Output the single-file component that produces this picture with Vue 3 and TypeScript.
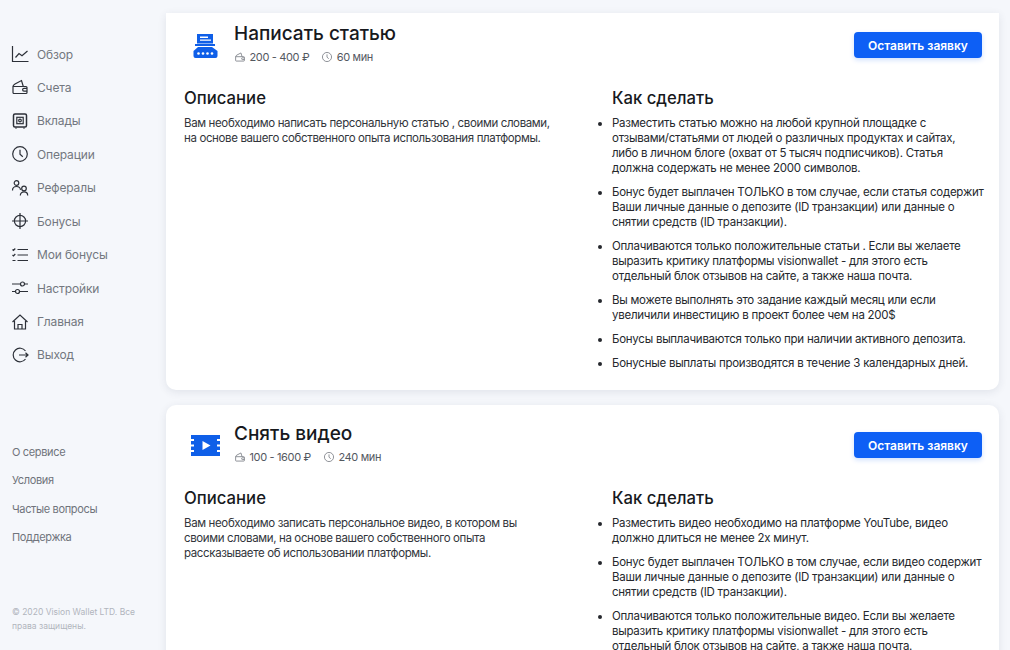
<template>
  <div class="page">
    <aside class="sidebar">
      <nav class="menu">
        <a v-for="item in menu" :key="item.label" class="menu-item">
          <svg class="menu-icon" viewBox="1 1 16 16" v-html="item.icon"></svg>
          <span>{{ item.label }}</span>
        </a>
      </nav>
      <div class="links">
        <a v-for="link in links" :key="link">{{ link }}</a>
      </div>
      <p class="copy">© 2020 Vision Wallet LTD. Все права защищены.</p>
    </aside>
    <main class="content">
      <section v-for="task in tasks" :key="task.title" class="card">
        <header class="card-head">
          <svg class="task-icon" viewBox="0 0 32 32" v-html="task.icon"></svg>
          <div class="head-text">
            <h2>{{ task.title }}</h2>
            <div class="meta">
              <svg class="meta-icon" viewBox="1 1 16 16" v-html="walletIcon"></svg>
              <span class="price">{{ task.price }}</span>
              <svg class="meta-icon" viewBox="1 1 16 16" v-html="clockIcon"></svg>
              <span>{{ task.time }}</span>
            </div>
          </div>
          <button class="apply">Оставить заявку</button>
        </header>
        <div class="columns">
          <div>
            <h3>Описание</h3>
            <p class="desc">{{ task.desc }}</p>
          </div>
          <div>
            <h3>Как сделать</h3>
            <ul>
              <li v-for="step in task.steps" :key="step">{{ step }}</li>
            </ul>
          </div>
        </div>
      </section>
    </main>
  </div>
</template>

<script setup lang="ts">
const walletIcon =
  '<path d="M2 8.500h13a1 1 0 0 1 1 1v5a1 1 0 0 1-1 1H3a1 1 0 0 1-1-1zM2 8.500c0-1 1-2 2-2.600L10.500 2.500l1.800 6M16 10.300h-3a1.400 1.400 0 0 0 0 2.800h3"/>'
const clockIcon = '<circle cx="9" cy="9" r="7.300"/><path d="M9 4.800v4.500l2.800 2.400"/>'

const menu = [
  { label: 'Обзор', icon: '<path d="M1.500 1v15.500h16M4.500 12.500l3.500-4 3 2.200L16.500 6"/>' },
  { label: 'Счета', icon: walletIcon },
  {
    label: 'Вклады',
    icon: '<rect x="2.500" y="2" width="13" height="13" rx="1.500" stroke-width="1.500"/><rect x="5.800" y="5.300" width="6.400" height="6.400"/><circle cx="9" cy="8.500" r="1.300"/><path d="M5 15.500v1.200M13 15.500v1.200"/>'
  },
  { label: 'Операции', icon: clockIcon },
  {
    label: 'Рефералы',
    icon: '<circle cx="5.500" cy="4" r="2.300"/><path d="M1.500 11.500c0-2.400 1.700-4 4-4s3.800 1.400 4 3.400"/><circle cx="13" cy="9.500" r="2.300"/><path d="M9.300 16.500c0-2.200 1.600-3.600 3.700-3.600s3.700 1.400 3.700 3.600"/>'
  },
  {
    label: 'Бонусы',
    icon: '<circle cx="9" cy="9" r="5.600"/><path d="M9 1v16M1 9h16"/>'
  },
  {
    label: 'Мои бонусы',
    icon: '<path d="M6.500 3.500H17M6.500 9H17M6.500 14.500H17M1.500 3.500l1 1 1.800-2M1.500 9l1 1 1.800-2M1.500 14.500h3"/>'
  },
  {
    label: 'Настройки',
    icon: '<path d="M1 5h8.500M13.500 5H17M1 12.500h3.500M8.500 12.500H17"/><circle cx="11.500" cy="5" r="2"/><circle cx="6.500" cy="12.500" r="2"/>'
  },
  {
    label: 'Главная',
    icon: '<path d="M1.500 9 9 2l7.500 7M3.500 8v8h11V8M7 16v-4.500h4V16"/>'
  },
  {
    label: 'Выход',
    icon: '<path d="M14.500 5a6.800 6.800 0 1 0 0 8M8 9h9M14.500 6.800 17 9l-2.500 2.200"/>'
  }
]

const links = ['О сервисе', 'Условия', 'Частые вопросы', 'Поддержка']

const articleIcon =
  '<path fill="#0f5fe8" d="M7 4h16v9.500H7zM5 14h20v2H5zM8 17h14l5.500 4v5a2 2 0 0 1-2 2H5.500a2 2 0 0 1-2-2v-5z"/><path fill="#fff" d="M10 6.500h8v1.500h-8zM10 9.500h11v1.200H10z"/><circle cx="8.500" cy="23.500" r="1.300" fill="#fff"/><circle cx="13" cy="23.500" r="1.300" fill="#fff"/><circle cx="17.500" cy="23.500" r="1.300" fill="#fff"/><circle cx="22" cy="23.500" r="1.300" fill="#fff"/>'
const videoIcon =
  '<path fill="#0f5fe8" d="M1 5h29v21H1z"/><path fill="#fff" d="M1 9h3v2H1zM1 14.500h3v2H1zM1 20h3v2H1zM27 9h3v2h-3zM27 14.500h3v2h-3zM27 20h3v2h-3zM12.500 11 20.500 15.500l-8 4.500z"/>'

const tasks = [
  {
    title: 'Написать статью',
    icon: articleIcon,
    price: '200 - 400 ₽',
    time: '60 мин',
    desc: 'Вам необходимо написать персональную статью , своими словами, на основе вашего собственного опыта использования платформы.',
    steps: [
      // word joiner and nbsp keep the line breaks where the design has them
      'Разместить статью можно на любой крупной площадке с отзывами/\u2060статьями от людей о различных продуктах и сайтах, либо\u00a0в личном блоге (охват от 5 тысяч подписчиков). Статья должна содержать не менее 2000 символов.',
      'Бонус будет выплачен ТОЛЬКО в том случае, если статья содержит Ваши личные данные о депозите (ID транзакции) или данные о снятии средств (ID транзакции).',
      'Оплачиваются только положительные статьи . Если вы желаете выразить критику платформы visionwallet - для этого есть отдельный блок отзывов на сайте, а также наша почта.',
      'Вы можете выполнять это задание каждый месяц или если увеличили инвестицию в проект более чем на 200$',
      'Бонусы выплачиваются только при наличии активного депозита.',
      'Бонусные выплаты производятся в течение 3 календарных дней.'
    ]
  },
  {
    title: 'Снять видео',
    icon: videoIcon,
    price: '100 - 1600 ₽',
    time: '240 мин',
    desc: 'Вам необходимо записать персональное видео, в котором вы своими словами, на основе вашего собственного опыта рассказываете об использовании платформы.',
    steps: [
      'Разместить видео необходимо на платформе YouTube, видео должно длиться не менее 2х минут.',
      'Бонус будет выплачен ТОЛЬКО в том случае, если видео содержит Ваши личные данные о депозите (ID транзакции) или данные о снятии средств (ID транзакции).',
      'Оплачиваются только положительные видео. Если вы желаете выразить критику платформы visionwallet - для этого есть отдельный блок отзывов на сайте, а также наша почта.'
    ]
  }
]
</script>

<style>
html,
body {
  margin: 0;
  height: 650px;
  overflow: hidden;
  background: #f5f7fb;
}
</style>

<style scoped>
.page {
  display: flex;
  height: 650px;
  overflow: hidden;
  font-family: Inter, "Liberation Sans", sans-serif;
  color: #1d1f24;
  background: #f5f7fb;
}
.sidebar {
  width: 166px;
  flex: none;
  box-sizing: border-box;
  padding: 42px 10px 0 12px;
}
.menu {
  display: flex;
  flex-direction: column;
  gap: 9.45px;
}
.menu-item {
  display: flex;
  align-items: center;
  gap: 9px;
  height: 24px;
  font-size: 12px;
  letter-spacing: -0.15px;
  color: #73777f;
}
.menu-icon {
  width: 16px;
  height: 16px;
  flex: none;
  fill: none;
  stroke: #2c3038;
  stroke-width: 1.2;
  overflow: visible;
}
.links {
  display: flex;
  flex-direction: column;
  gap: 14px;
  margin-top: 78px;
  font-size: 11px;
  letter-spacing: -0.35px;
  line-height: 14.3px;
  color: #70747c;
}
.copy {
  margin: 61px 0 0;
  font-size: 8.5px;
  line-height: 14px;
  color: #b1b5bd;
}
.content {
  flex: 1;
  min-width: 0;
  padding: 13px 11px 0 0;
  display: flex;
  flex-direction: column;
  gap: 15px;
}
.card {
  flex: none;
  background: #fff;
  border-radius: 10px;
  box-shadow: 0 2px 8px rgba(40, 50, 80, 0.1);
  padding: 15px 17px 19px 18px;
}
.card:first-child {
  padding-top: 7px;
  border-radius: 0 0 10px 10px;
}
.card-head {
  display: flex;
  align-items: flex-start;
  height: 60px;
}
.task-icon {
  width: 32px;
  height: 32px;
  margin: 10px 12px 0 6px;
  flex: none;
}
.head-text {
  flex: 1;
}
h2 {
  margin: 0;
  font-size: 19px;
  line-height: 27px;
  font-weight: 500;
  color: #17191d;
}
.meta {
  display: flex;
  align-items: center;
  margin-top: 2px;
  padding-left: 1px;
  font-size: 11px;
  letter-spacing: -0.35px;
  line-height: 16px;
  color: #54585f;
}
.meta-icon {
  width: 10px;
  height: 10px;
  margin-right: 4.5px;
  fill: none;
  stroke: #777b82;
  stroke-width: 1.3;
  overflow: visible;
}
.price {
  margin-right: 13px;
}
.apply {
  width: 128px;
  height: 26px;
  margin-top: 12px;
  border: 0;
  border-radius: 4px;
  background: #0d5ff5;
  box-shadow: 0 2px 5px rgba(13, 95, 245, 0.2);
  color: #fff;
  font: 600 12px Inter, "Liberation Sans", sans-serif;
}
.columns {
  display: grid;
  grid-template-columns: 428px 1fr;
  margin-top: 7px;
}
h3 {
  margin: 0 0 6px;
  font-size: 16.7px;
  line-height: 23px;
  font-weight: 500;
  color: #17191d;
}
.desc {
  margin: 0;
  max-width: 368px;
  font-size: 11.5px;
  letter-spacing: -0.37px;
  line-height: 15px;
  color: #32353b;
}
ul {
  margin: 0;
  padding: 0;
  width: 374px;
  list-style: disc;
  font-size: 11.5px;
  letter-spacing: -0.25px;
  line-height: 15px;
  color: #25282d;
}
li {
  margin-bottom: 9px;
}
li:last-child {
  margin-bottom: 0;
}
</style>
